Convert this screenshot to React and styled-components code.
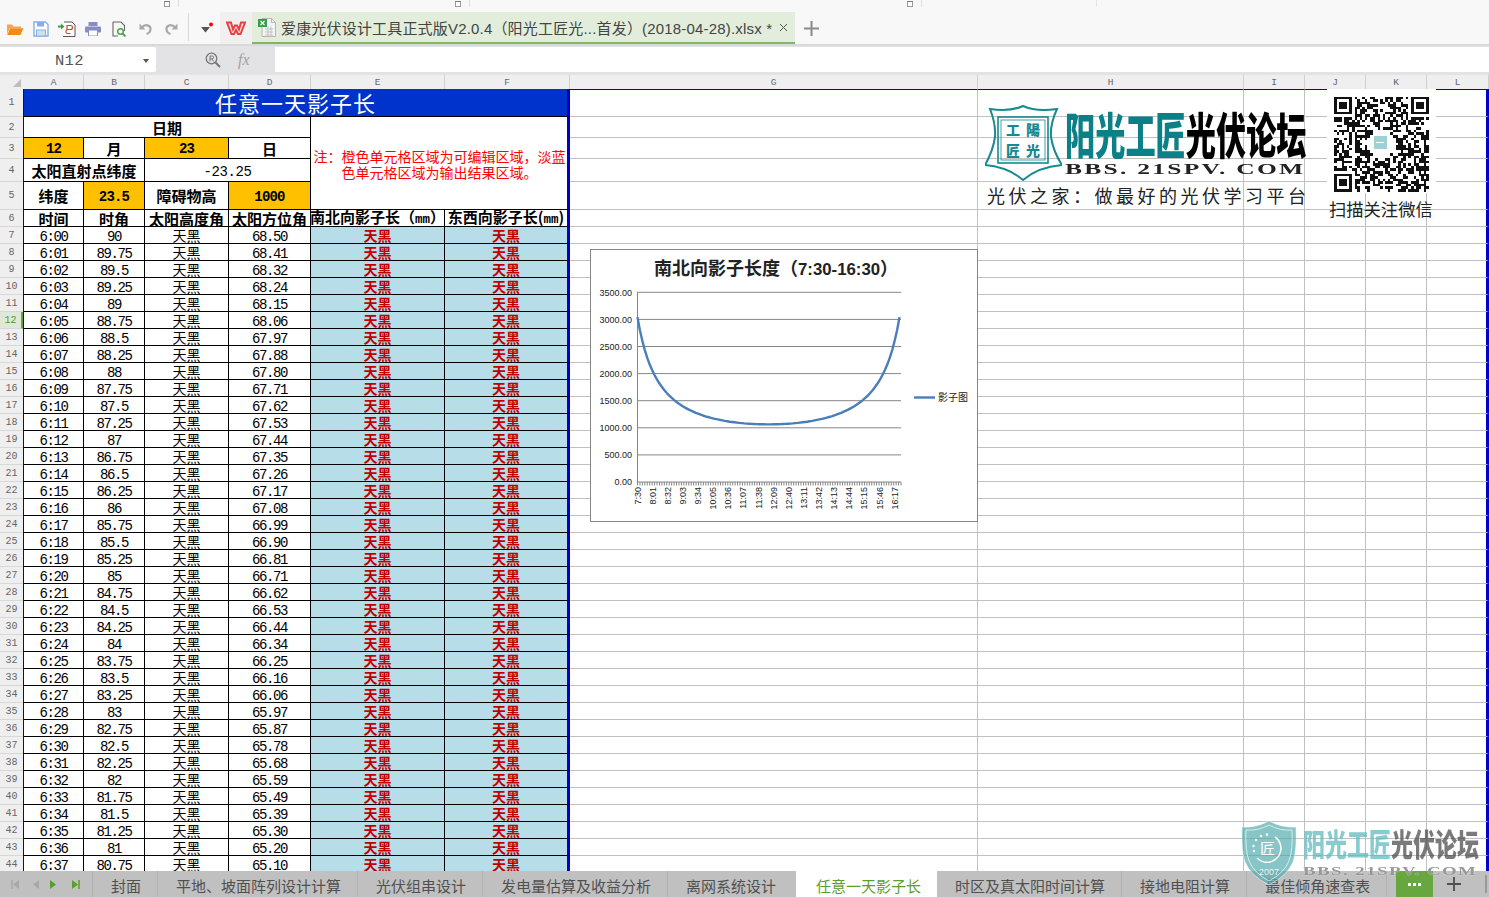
import React from "react";
import styled, { createGlobalStyle } from "styled-components";

const CJK = `"Noto Sans CJK SC", "Noto Sans", sans-serif`;
const MONO = `"Liberation Mono", "Noto Sans CJK SC", monospace`;
const SANS = `"Liberation Sans", "Noto Sans CJK SC", sans-serif`;
const COLS = [60, 61, 84, 82, 134, 125, 408, 266, 61, 61, 61, 62];
const COL_NAMES = ["A", "B", "C", "D", "E", "F", "G", "H", "I", "J", "K", "L"];
const ROW_HEIGHTS = [28, 21, 21, 23, 28, 17, ...Array(38).fill(17)];
const BLUE = "#0000cc";

const AZIMUTH = ["68.50","68.41","68.32","68.24","68.15","68.06","67.97","67.88","67.80","67.71","67.62","67.53","67.44","67.35","67.26","67.17","67.08","66.99","66.90","66.81","66.71","66.62","66.53","66.44","66.34","66.25","66.16","66.06","65.97","65.87","65.78","65.68","65.59","65.49","65.39","65.30","65.20","65.10"];
const ANGLE = ["90","89.75","89.5","89.25","89","88.75","88.5","88.25","88","87.75","87.5","87.25","87","86.75","86.5","86.25","86","85.75","85.5","85.25","85","84.75","84.5","84.25","84","83.75","83.5","83.25","83","82.75","82.5","82.25","82","81.75","81.5","81.25","81","80.75"];
const SHEETS = ["封面", "平地、坡面阵列设计计算", "光伏组串设计", "发电量估算及收益分析", "离网系统设计"];
const SHEETS_AFTER = ["时区及真太阳时间计算", "接地电阻计算", "最佳倾角速查表"];

const Global = createGlobalStyle`
  * { box-sizing: border-box; }
  html, body { margin: 0; padding: 0; background: #fff; overflow: hidden; }
  body { font-family: ${CJK}; }
`;

const Page = styled.div`
  position: relative;
  width: 1489px;
  height: 897px;
  display: flex;
  flex-direction: column;
  overflow: hidden;
`;

/* ---------- top chrome ---------- */
const TopBar = styled.header`
  height: 46px;
  flex: none;
  background: #f8f8f8;
  border-bottom: 2px solid #d9d9d9;
  display: flex;
  flex-direction: column;
`;
const RibbonStub = styled.div`
  height: 9px;
  display: flex;
  flex: none;
`;
const RibbonEnd = styled.div`
  width: ${(p) => p.$w}px;
  height: 7px;
  border-right: 1px solid ${(p) => (p.$plain ? "#e6e6e6" : "#e0e0e0")};
  display: flex;
  justify-content: flex-end;
  padding-right: 8px;
`;
const Launcher = styled.i`
  display: block;
  width: 6px;
  height: 6px;
  margin-top: 1px;
  border: 1px solid #999;
  border-top-color: #777;
  background: #fff;
`;
const QuickRow = styled.div`
  flex: 1;
  display: flex;
  align-items: stretch;
  margin-top: 3px;
  padding-left: 2px;
`;
const QuickBtn = styled.div`
  width: 26px;
  display: flex;
  align-items: center;
  justify-content: center;
  padding-top: 1px;
`;
const QuickSep = styled.div`
  width: 1px;
  margin: 1px 4px 0;
  background: #d8d8d8;
  height: 28px;
`;
const MenuBtn = styled.div`
  width: 27px;
  display: flex;
  align-items: center;
  justify-content: center;
`;
const WpsBtn = styled.div`
  width: 32px;
  background: #f0f0f0;
  display: flex;
  align-items: center;
  justify-content: center;
`;
const FileTab = styled.div`
  width: 543px;
  display: flex;
  align-items: center;
  gap: 5px;
  padding: 0 0 0 6px;
  background: #e2eedb;
  border-bottom: 2px solid #84b36b;
  font: 15px ${SANS};
  letter-spacing: 0.18px;
  color: #444;
  white-space: nowrap;
`;
const FileName = styled.span`
  flex: 1;
`;
const CloseMark = styled.svg`
  margin-right: 7px;
  flex: none;
`;
const PlusBtn = styled.div`
  width: 32px;
  display: flex;
  align-items: center;
  justify-content: center;
`;

const FormulaBar = styled.div`
  height: 29px;
  flex: none;
  display: flex;
  background: #e3e3e5;
  padding: 1px 0 3px;
`;
const NameBox = styled.div`
  width: 156px;
  background: #fff;
  border-radius: 0 2px 2px 0;
  display: flex;
  align-items: center;
  justify-content: space-between;
  padding: 2px 7px 0 55px;
  font: 15.5px ${MONO};
  letter-spacing: 0.3px;
  color: #555;
`;
const Caret = styled.i`
  width: 0;
  height: 0;
  border: 3.5px solid transparent;
  border-top: 4px solid #555;
  border-bottom: 0;
`;
const FxZone = styled.div`
  width: 119px;
  display: flex;
  align-items: center;
  padding-left: 49px;
  gap: 17px;
`;
const FxText = styled.span`
  font: italic 16px "Liberation Serif", serif;
  color: #a2a2a2;
`;
const FormulaInput = styled.div`
  flex: 1;
  background: #fff;
`;

/* ---------- sheet ---------- */
const ColHeader = styled.div`
  height: 14px;
  flex: none;
  display: flex;
  background: #efefef;
`;
const Corner = styled.div`
  width: 24px;
  display: flex;
  justify-content: flex-end;
  align-items: flex-end;
  padding: 0 3px 2px 0;
`;
const ColLabel = styled.div`
  width: ${(p) => p.$w}px;
  border-right: 1px solid #d0d0d0;
  text-align: center;
  font: 9.5px/15px ${MONO};
  color: #666;
`;
const SheetBody = styled.div`
  flex: 1;
  min-height: 0;
  display: flex;
  overflow: hidden;
`;
const RowHeader = styled.div`
  width: 23px;
  flex: none;
  background: #efefef;
`;
const RowLabel = styled.div`
  height: ${(p) => p.$h}px;
  border-bottom: 1px solid #d8d8d8;
  border-right: ${(p) => (p.$active ? "2px solid #5fa53d" : "0")};
  background: ${(p) => (p.$active ? "#dfe8d9" : "transparent")};
  color: ${(p) => (p.$active ? "#4f9a2f" : "#666")};
  font: 10px/${(p) => p.$h}px ${MONO};
  text-align: center;
`;
const Canvas = styled.div`
  position: relative;
  flex: none;
  border-left: 1px solid ${BLUE};
`;
const Grid = styled.div`
  display: grid;
  grid-template-columns: ${COLS.map((c) => c + "px").join(" ")};
  grid-template-rows: ${ROW_HEIGHTS.map((c) => c + "px").join(" ")};
`;
const Cell = styled.div`
  grid-column: span ${(p) => p.$span || 1};
  grid-row: span ${(p) => p.$rows || 1};
  display: flex;
  align-items: center;
  justify-content: center;
  background: #fff;
  color: #000;
  white-space: nowrap;
  overflow: visible;
  border-right: ${(p) => (p.$edge ? `3px solid ${BLUE}` : "1px solid #000")};
  border-bottom: 1px solid #000;
  font-size: 14px;
  line-height: 1;
`;
const TitleCell = styled(Cell)`
  background: #0033cc;
  color: #fff;
  font-size: 22px;
  letter-spacing: 1px;
  border-bottom: 1px solid #000;
  padding-bottom: 1px;
`;
const HeadCell = styled(Cell)`
  font-size: 15px;
  font-weight: 700;
`;
const InputCell = styled(Cell)`
  background: #ffc000;
  font: 700 14px ${MONO};
  letter-spacing: -0.8px;
  padding-top: 2px;
`;
const NumCell = styled(Cell)`
  font: 14px ${MONO};
  letter-spacing: -1.4px;
  padding-top: 3px;
`;
const WideNumCell = styled(NumCell)`
  letter-spacing: -0.4px;
`;
const NoteCell = styled(Cell)`
  color: #f00;
  line-height: 16px;
  text-align: center;
  padding: 1px 0 0 1px;
`;
const ResultCell = styled(Cell)`
  background: #b7dde8;
  color: #c00000;
  font-weight: 700;
`;
const Mm = styled.span`
  font: 700 12.5px ${MONO};
`;
const BlankCell = styled.div`
  background: #fff;
  border-right: ${(p) => (p.$last ? `3px solid ${BLUE}` : "1px solid #c0c0c0")};
  border-bottom: 1px solid #c0c0c0;
  border-top: ${(p) => (p.$first ? `1px solid ${BLUE}` : "0")};
`;

/* ---------- overlays on the sheet ---------- */
const ChartFrame = styled.div`
  position: absolute;
  left: 566px;
  top: 160px;
  width: 388px;
  height: 273px;
  background: #fff;
  border: 1px solid #868686;
`;
const LogoBlock = styled.div`
  position: absolute;
  left: 961px;
  top: 16px;
  width: 326px;
`;
const LogoTop = styled.div`
  display: flex;
  gap: 3px;
`;
const LogoTextCol = styled.div`
  display: flex;
  flex-direction: column;
`;
const BrandLine = styled.div`
  height: 57px;
  font-size: 30.2px;
  line-height: 30px;
  font-weight: 900;
  white-space: nowrap;
  transform: scaleY(1.62);
  transform-origin: top left;
  padding-top: 2px;
  color: #000;
`;
const Teal = styled.span`
  color: #0b8087;
`;
const BbsLine = styled.div`
  font: 700 15px/15px "Liberation Serif", serif;
  letter-spacing: 1.33px;
  white-space: nowrap;
  color: #222;
  transform: scaleX(1.7);
  transform-origin: top left;
`;
const Tagline = styled.div`
  margin-top: 3px;
  padding-left: 2px;
  font-size: 18px;
  line-height: 22px;
  letter-spacing: 3.5px;
  white-space: nowrap;
  color: #222;
`;
const QrBlock = styled.div`
  position: absolute;
  left: 1303px;
  top: 0;
  width: 109px;
  height: 104px;
  background: #fff;
  display: flex;
  justify-content: center;
  padding-top: 7px;
`;
const QrCaption = styled.div`
  position: absolute;
  left: 1305px;
  top: 109px;
  font-size: 17.3px;
  line-height: 22px;
  color: #222;
  white-space: nowrap;
`;

/* ---------- sheet tabs ---------- */
const TabBar = styled.nav`
  height: 26px;
  flex: none;
  background: #c0c0c0;
  display: flex;
  align-items: stretch;
  font-size: 15px;
  color: #505050;
  white-space: nowrap;
`;
const TabNav = styled.div`
  width: 93px;
  border-right: 1px solid #b0b0b0;
  flex: none;
`;
const Tab = styled.div`
  display: flex;
  align-items: center;
  padding: 2px 16px 0 18px;
  border-right: ${(p) => (p.$plain ? "0" : "1px solid #b0b0b0")};
`;
const ActiveTab = styled.div`
  display: flex;
  align-items: center;
  margin-left: 4px;
  padding: 2px 16px 0 20px;
  background: #fff;
  color: #5c9e2c;
`;
const MoreBtn = styled.div`
  width: 37px;
  margin-left: 9px;
  background: #68a73f;
  color: #fff;
  display: flex;
  align-items: center;
  justify-content: center;
  gap: 2px;
`;
const Dot = styled.i`
  width: 3px;
  height: 3px;
  background: #fff;
`;
const AddBtn = styled.div`
  width: 41px;
  display: flex;
  align-items: center;
  justify-content: center;
`;
const TabEnd = styled.div`
  width: 2px;
  margin: 4px 0 4px 11px;
  background: #999;
`;

/* ---------- watermark, lying over sheet and tabs ---------- */
const Watermark = styled.div`
  position: absolute;
  left: 1240px;
  top: 820px;
  width: 242px;
  height: 66px;
  display: flex;
  gap: 5px;
  pointer-events: none;
`;
const WmText = styled.div`
  display: flex;
  flex-direction: column;
  padding-top: 7px;
`;
const WmBrand = styled.div`
  height: 37px;
  font-size: 22px;
  line-height: 22px;
  font-weight: 900;
  white-space: nowrap;
  transform: scaleY(1.4);
  transform-origin: top left;
  color: rgba(70, 70, 70, 0.72);
`;
const WmTeal = styled.span`
  color: rgba(90, 185, 190, 0.72);
`;
const WmBbs = styled.div`
  font: 700 13px/13px "Liberation Serif", serif;
  letter-spacing: 1px;
  white-space: nowrap;
  color: rgba(110, 110, 110, 0.7);
  text-shadow: 0 0 1px #fff;
  transform: scaleX(1.45);
  transform-origin: top left;
`;

/* ---------- drawings ---------- */
const OpenIcon = () => (
  <svg width="18" height="14" viewBox="0 0 18 14">
    <path d="M1 2.5h5l1.5 2H15v1.5H4L1 12z" fill="#f3a64d" />
    <path d="M4.2 6.2H17.5L14.5 13H1.2z" fill="#f08a1d" />
  </svg>
);
const SaveIcon = () => (
  <svg width="16" height="16" viewBox="0 0 16 16" fill="none">
    <path d="M1 1h11.5L15 3.5V15H1z" fill="#fff" stroke="#86aee6" strokeWidth="1.4" />
    <rect x="4" y="1" width="7" height="4.5" fill="#86aee6" />
    <rect x="3.5" y="9" width="9" height="6" fill="#cfe0f6" stroke="#86aee6" />
  </svg>
);
const PdfIcon = () => (
  <svg width="18" height="16" viewBox="0 0 18 16" fill="none">
    <path d="M6 1h8l3 3v11.5H5" stroke="#555" strokeWidth="1" fill="#fff" />
    <path d="M0 4.5h3V2.5l3.5 3-3.500 3v-2H0z" fill="#3f9e45" />
    <path d="M9 9V4.500h3.500a2 2 0 0 1 0 4H10c-2.500 0-3 3.500-.500 4h3" stroke="#d2443e" strokeWidth="1.200" />
  </svg>
);
const PrintIcon = () => (
  <svg width="16" height="14" viewBox="0 0 16 14">
    <rect x="3.500" y="0" width="9" height="4" fill="#8a8dc4" />
    <rect x="0" y="4.500" width="16" height="6" rx="1" fill="#8a8dc4" />
    <rect x="3.500" y="8" width="9" height="6" fill="#fff" stroke="#8a8dc4" />
  </svg>
);
const PreviewIcon = () => (
  <svg width="15" height="16" viewBox="0 0 15 16" fill="none">
    <path d="M1 1h8l3.500 3.500V10M6 15H1V1" stroke="#666" strokeWidth="1.100" />
    <circle cx="8.500" cy="10.500" r="2.800" stroke="#46a24c" strokeWidth="1.400" />
    <path d="M10.500 12.500l3 3" stroke="#46a24c" strokeWidth="1.800" />
  </svg>
);
const UndoIcon = ({ flip }) => (
  <svg width="13" height="13" viewBox="0 0 13 13" fill="none" style={flip ? { transform: "scaleX(-1)" } : undefined}>
    <path d="M3 5.500C6 1.500 12 3 11.500 7.500 11.200 10 9.500 11.500 7.500 12" stroke="#a9a9a9" strokeWidth="2.200" />
    <path d="M0.500 1.500v6h6z" fill="#a9a9a9" />
  </svg>
);
const MenuIcon = () => (
  <svg width="14" height="13" viewBox="0 0 14 13">
    <path d="M1 5h9L5.500 10.500z" fill="#555" />
    <circle cx="11" cy="2.500" r="2" fill="#f00" />
  </svg>
);
const WpsIcon = () => (
  <svg width="20" height="14" viewBox="0 0 20 14" fill="none">
    <path d="M1 1.500h4l2 7 2-4h2l2 4 2-7h4L14.500 13H12l-2-4-2 4H5.500z" stroke="#e8403f" strokeWidth="2" />
  </svg>
);
const XlsIcon = () => (
  <svg width="18" height="19" viewBox="0 0 18 19" fill="none">
    <path d="M4 .5h9.500L17.500 4.500V18.500H4z" fill="#f4f4f4" stroke="#b5b5b5" />
    <path d="M13.500 .5v4h4" stroke="#b5b5b5" />
    <path d="M7 11h8M7 14h8M7 17h8M10 8.500v9M13 8.500v9" stroke="#b9b9b9" strokeWidth="0.800" />
    <rect x="0" y="1" width="9" height="8" fill="#3a9a45" />
    <path d="M2.500 3l4 4M6.500 3l-4 4" stroke="#fff" strokeWidth="1.200" />
  </svg>
);
const PlusIcon = ({ size = 15, color = "#8a8a8a" }) => (
  <svg width={size} height={size} viewBox="0 0 15 15">
    <path d="M0 7.500h15M7.500 0v15" stroke={color} strokeWidth="2" />
  </svg>
);
const SearchIcon = () => (
  <svg width="16" height="16" viewBox="0 0 16 16" fill="none">
    <circle cx="6.500" cy="6.500" r="5.300" stroke="#777" strokeWidth="1.300" />
    <path d="M10.500 10.500L15 15" stroke="#777" strokeWidth="2" />
    <path d="M5 9.500V4h2.200a1.400 1.400 0 0 1 0 2.800H5M7 7l1.600 2.500" stroke="#777" />
  </svg>
);
const SheetCornerIcon = () => (
  <svg width="8" height="8" viewBox="0 0 8 8">
    <path d="M8 0v8H0z" fill="#bdbdbd" />
  </svg>
);
const NavIcons = () => (
  <svg width="92" height="26" viewBox="0 0 92 26">
    <path d="M12 9v9" stroke="#a8a8a8" strokeWidth="1.500" />
    <path d="M19 9v9l-6-4.500z" fill="#a8a8a8" />
    <path d="M39 9v9l-6-4.500z" fill="#a8a8a8" />
    <path d="M50 9v9l6-4.500z" fill="#5a9e2c" />
    <path d="M72 9v9l6-4.500z" fill="#5a9e2c" />
    <path d="M79 9v9" stroke="#5a9e2c" strokeWidth="1.500" />
  </svg>
);

const yOf = (v) => 482 - (v / 500) * 27.1;
const RAD = Math.PI / 180;
const shadowAt = (hourAngle) => {
  const lat = 23.5 * RAD;
  const dec = -23.25 * RAD;
  const sinAlt = Math.sin(lat) * Math.sin(dec) + Math.cos(lat) * Math.cos(dec) * Math.cos(hourAngle * RAD);
  const cosAlt = Math.sqrt(1 - sinAlt * sinAlt);
  const cosAz = (sinAlt * Math.sin(lat) - Math.sin(dec)) / (cosAlt * Math.cos(lat));
  return (1000 * cosAlt * cosAz) / sinAlt;
};
const curvePath = () => {
  const pts = [];
  for (let i = 0; i <= 108; i++) {
    const x = 637.5 + (i / 108) * 262;
    pts.push(`${x.toFixed(1)} ${yOf(shadowAt(-67.5 + (i / 108) * 135)).toFixed(1)}`);
  }
  return "M" + pts.join("L");
};
const XLABELS = ["7:30","8:01","8:32","9:03","9:34","10:05","10:36","11:07","11:38","12:09","12:40","13:11","13:42","14:13","14:44","15:15","15:46","16:17"];

const ShadowChart = () => (
  <svg width="386" height="271" viewBox="591 250 386 271">
    <text x="654" y="275" fontSize="18" fontWeight="700" fontFamily={CJK} fill="#222">
      南北向影子长度（
      <tspan fontFamily={SANS} fontSize="16.800">7:30-16:30</tspan>
      ）
    </text>
    {[0, 500, 1000, 1500, 2000, 2500, 3000, 3500].map((v) => (
      <g key={v}>
        {v > 0 && <line x1="637" x2="901" y1={yOf(v)} y2={yOf(v)} stroke="#868686" />}
        <text x="632" y={yOf(v) + 3.4} textAnchor="end" fontSize="9" fontFamily='"Liberation Sans", sans-serif' fill="#222">
          {v.toFixed(2)}
        </text>
      </g>
    ))}
    <path d="M637.500 292V482H901" fill="none" stroke="#868686" />
    {Array.from({ length: 109 }, (_, i) => (
      <line key={i} x1={637.5 + i * 2.44} x2={637.5 + i * 2.44} y1="482" y2="485.500" stroke="#868686" />
    ))}
    {XLABELS.map((t, i) => {
      const x = 637.5 + i * 15.13;
      return (
        <text key={t} transform={`translate(${x + 3} 487) rotate(-90)`} textAnchor="end" fontSize="9" fontFamily='"Liberation Sans", sans-serif' fill="#222">
          {t}
        </text>
      );
    })}
    <path d={curvePath()} fill="none" stroke="#4a7ebb" strokeWidth="2.400" strokeLinejoin="round" />
    <line x1="914" x2="935" y1="397.500" y2="397.500" stroke="#4a7ebb" strokeWidth="2.400" />
    <text x="938" y="401" fontSize="10" fontFamily={CJK} fill="#222">影子图</text>
  </svg>
);

const Shield = () => (
  <svg width="77" height="76" viewBox="985 106 77 76" fill="none">
    <path d="M1023 107Q1010 113 990 110Q996 125 995 138Q993 152 985 166Q1008 168 1023 181Q1038 168 1062 166Q1053 152 1051 138Q1050 125 1057 110Q1036 113 1023 107Z" stroke="#17898f" strokeWidth="2" />
    <rect x="998" y="118" width="50" height="46" stroke="#17898f" strokeWidth="1.600" />
    <rect x="1001" y="121" width="44" height="40" stroke="#17898f" strokeWidth="0.800" />
    <g fontFamily={CJK} fontWeight="900" fontSize="14" fill="#17898f" textAnchor="middle">
      <text x="1013" y="136">工</text>
      <text x="1033" y="136">陽</text>
      <text x="1013" y="157">匠</text>
      <text x="1033" y="157">光</text>
    </g>
  </svg>
);

const QR_N = 37;
const finder = (x, y) => `M${x} ${y}h7v7h-7zM${x + 1} ${y + 1}v5h5v-5zM${x + 2} ${y + 2}h3v3h-3z`;
const qrPath = () => {
  let seed = 2018;
  const rnd = () => {
    seed = (seed * 1103515245 + 12345) & 0x7fffffff;
    return (seed >> 16) / 32768;
  };
  let d = finder(0, 0) + finder(30, 0) + finder(0, 30);
  for (let y = 0; y < QR_N; y++) {
    for (let x = 0; x < QR_N; x++) {
      const inF = (x < 8 && y < 8) || (x > 28 && y < 8) || (x < 8 && y > 28);
      const inLogo = Math.hypot(x - 18, y - 18) < 5.5;
      if (!inF && !inLogo && rnd() > 0.45) d += `M${x} ${y}h1v1h-1z`;
    }
  }
  return d;
};
const QrSvg = styled.svg`
  filter: blur(0.5px);
`;
const QrCode = () => (
  <QrSvg width="95" height="96" viewBox="0 0 37 37" shapeRendering="crispEdges">
    <path d={qrPath()} fill="#111" fillRule="evenodd" />
    <rect x="15.500" y="15.500" width="5" height="5" fill="#9fd0d2" />
    <path d="M16.500 18h3" stroke="#fff" strokeWidth="0.500" />
  </QrSvg>
);

const WmShield = () => (
  <svg width="58" height="66" viewBox="0 0 58 66" fill="none">
    <path d="M29 1Q16 8 2 7Q1 30 5 42Q11 56 29 65Q47 56 53 42Q57 30 56 7Q42 8 29 1Z" fill="rgba(78,170,172,0.68)" stroke="rgba(255,255,255,0.5)" />
    <path d="M29 5Q18 11 6 10Q5 30 9 41Q14 53 29 61Q44 53 49 41Q53 30 52 10Q40 11 29 5Z" stroke="rgba(255,255,255,0.65)" />
    <path d="M35 17A14 14 0 0 1 41 28A14 14 0 0 1 17 38" stroke="rgba(255,255,255,0.95)" strokeWidth="1.600" />
    <circle cx="14" cy="31" r="1.200" fill="#fff" />
    <circle cx="13.500" cy="26" r="1.200" fill="#fff" />
    <circle cx="16" cy="20" r="1.200" fill="#fff" />
    <circle cx="21" cy="16" r="1.200" fill="#fff" />
    <circle cx="27" cy="14.500" r="1.200" fill="#fff" />
    <text x="27.500" y="34" textAnchor="middle" fontSize="15" fontFamily={CJK} fill="#fff">匠</text>
    <text x="29" y="55" textAnchor="middle" fontSize="9" fontFamily='"Liberation Sans", sans-serif' fill="rgba(255,255,255,0.85)">2007</text>
  </svg>
);

const fmtTime = (i) => `6:${String(i).padStart(2, "0")}`;
const Blanks = ({ first }) =>
  [0, 1, 2, 3, 4, 5].map((i) => <BlankCell key={i} $first={first} $last={i === 5} />);

export default function App() {
  return (
    <Page>
      <Global />
      <TopBar>
        <RibbonStub>
          <RibbonEnd $w={179}><Launcher /></RibbonEnd>
          <RibbonEnd $w={291}><Launcher /></RibbonEnd>
          <RibbonEnd $w={452}><Launcher /></RibbonEnd>
          <RibbonEnd $w={175} $plain />
        </RibbonStub>
        <QuickRow>
          <QuickBtn><OpenIcon /></QuickBtn>
          <QuickBtn><SaveIcon /></QuickBtn>
          <QuickBtn><PdfIcon /></QuickBtn>
          <QuickBtn><PrintIcon /></QuickBtn>
          <QuickBtn><PreviewIcon /></QuickBtn>
          <QuickBtn><UndoIcon /></QuickBtn>
          <QuickBtn><UndoIcon flip /></QuickBtn>
          <QuickSep />
          <MenuBtn><MenuIcon /></MenuBtn>
          <WpsBtn><WpsIcon /></WpsBtn>
          <FileTab>
            <XlsIcon />
            <FileName>爱康光伏设计工具正式版V2.0.4（阳光工匠光...首发）(2018-04-28).xlsx *</FileName>
            <CloseMark width="9" height="9" viewBox="0 0 9 9">
              <path d="M1 1l7 7M8 1L1 8" stroke="#555" />
            </CloseMark>
          </FileTab>
          <PlusBtn><PlusIcon /></PlusBtn>
        </QuickRow>
      </TopBar>

      <FormulaBar>
        <NameBox>N12<Caret /></NameBox>
        <FxZone>
          <SearchIcon />
          <FxText>fx</FxText>
        </FxZone>
        <FormulaInput />
      </FormulaBar>

      <ColHeader>
        <Corner><SheetCornerIcon /></Corner>
        {COLS.map((w, i) => (
          <ColLabel key={i} $w={w}>{COL_NAMES[i]}</ColLabel>
        ))}
      </ColHeader>

      <SheetBody>
        <RowHeader>
          {ROW_HEIGHTS.map((h, i) => (
            <RowLabel key={i} $h={h} $active={i === 11}>{i + 1}</RowLabel>
          ))}
        </RowHeader>
        <Canvas>
          <Grid>
            <TitleCell $span={6} $edge>任意一天影子长</TitleCell>
            <Blanks first />

            <HeadCell $span={4}>日期</HeadCell>
            <NoteCell $span={2} $rows={4} $edge>
              <span>注：橙色单元格区域为可编辑区域，淡蓝<br />色单元格区域为输出结果区域。</span>
            </NoteCell>
            <Blanks />

            <InputCell>12</InputCell>
            <HeadCell>月</HeadCell>
            <InputCell>23</InputCell>
            <HeadCell>日</HeadCell>
            <Blanks />

            <HeadCell $span={2}>太阳直射点纬度</HeadCell>
            <WideNumCell $span={2}>-23.25</WideNumCell>
            <Blanks />

            <HeadCell>纬度</HeadCell>
            <InputCell>23.5</InputCell>
            <HeadCell>障碍物高</HeadCell>
            <InputCell>1000</InputCell>
            <Blanks />

            <HeadCell>时间</HeadCell>
            <HeadCell>时角</HeadCell>
            <HeadCell>太阳高度角</HeadCell>
            <HeadCell>太阳方位角</HeadCell>
            <HeadCell><span>南北向影子长（<Mm>mm</Mm>）</span></HeadCell>
            <HeadCell $edge><span>东西向影子长(<Mm>mm</Mm>)</span></HeadCell>
            <Blanks />

            {AZIMUTH.map((az, i) => (
              <React.Fragment key={i}>
                <NumCell>{fmtTime(i)}</NumCell>
                <NumCell>{ANGLE[i]}</NumCell>
                <Cell>天黑</Cell>
                <NumCell>{az}</NumCell>
                <ResultCell>天黑</ResultCell>
                <ResultCell $edge>天黑</ResultCell>
                <Blanks />
              </React.Fragment>
            ))}
          </Grid>

          <ChartFrame><ShadowChart /></ChartFrame>

          <LogoBlock>
            <LogoTop>
              <Shield />
              <LogoTextCol>
                <BrandLine><Teal>阳光工匠</Teal>光伏论坛</BrandLine>
                <BbsLine>BBS. 21SPV. COM</BbsLine>
              </LogoTextCol>
            </LogoTop>
            <Tagline>光伏之家：做最好的光伏学习平台</Tagline>
          </LogoBlock>
          <QrBlock><QrCode /></QrBlock>
          <QrCaption>扫描关注微信</QrCaption>
        </Canvas>
      </SheetBody>

      <TabBar>
        <TabNav><NavIcons /></TabNav>
        {SHEETS.map((s, i) => (
          <Tab key={s} $plain={i === SHEETS.length - 1}>{s}</Tab>
        ))}
        <ActiveTab>任意一天影子长</ActiveTab>
        {SHEETS_AFTER.map((s) => (
          <Tab key={s}>{s}</Tab>
        ))}
        <MoreBtn><Dot /><Dot /><Dot /></MoreBtn>
        <AddBtn><PlusIcon size={14} color="#505050" /></AddBtn>
        <TabEnd />
      </TabBar>

      <Watermark>
        <WmShield />
        <WmText>
          <WmBrand><WmTeal>阳光工匠</WmTeal>光伏论坛</WmBrand>
          <WmBbs>BBS. 21SPV. COM</WmBbs>
        </WmText>
      </Watermark>
    </Page>
  );
}
